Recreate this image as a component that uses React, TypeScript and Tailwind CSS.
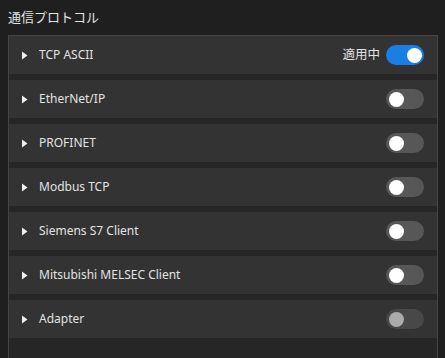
import React from "react";

const rows = [
  { name: "TCP ASCII", on: true },
  { name: "EtherNet/IP" },
  { name: "PROFINET" },
  { name: "Modbus TCP" },
  { name: "Siemens S7 Client" },
  { name: "Mitsubishi MELSEC Client" },
  { name: "Adapter", disabled: true },
];

function Toggle({ on, disabled }: { on?: boolean; disabled?: boolean }) {
  if (on) {
    return (
      <div className="flex h-[20px] w-[38px] items-center justify-end rounded-full bg-[#1a7ee4] pr-[2px]">
        <div className="h-[15px] w-[15px] rounded-full bg-white" />
      </div>
    );
  }
  return (
    <div
      className={
        disabled
          ? "flex h-[20px] w-[38px] items-center rounded-full bg-[#484848] pl-[3px]"
          : "flex h-[20px] w-[38px] items-center rounded-full bg-[#575757] pl-[3px]"
      }
    >
      <div
        className={
          disabled
            ? "h-[15px] w-[15px] rounded-full bg-[#ababab]"
            : "h-[15px] w-[15px] rounded-full bg-white"
        }
      />
    </div>
  );
}

export default function App() {
  return (
    <div
      className="h-[358px] w-[445px] overflow-hidden bg-[#1f1f1f] text-[#e2e2e2]"
      style={{ fontFamily: '"Noto Sans", "Noto Sans CJK JP", sans-serif' }}
    >
      <div className="flex h-[35px] items-center pl-[8px] text-[13px]">通信プロトコル</div>
      <div className="ml-[8px] mr-[7px] h-[323px] border-x border-t border-[#464646] bg-[#262626]">
        <div className="flex flex-col gap-[6px]">
          {rows.map((r) => (
            <div key={r.name} className="flex h-[38px] items-center bg-[#333333] pl-[13px] pr-[13px]">
              <svg width="6" height="9" viewBox="0 0 6 9" className="shrink-0">
                <path d="M0 0.5 L5.5 4.5 L0 8.5 Z" fill="#f0f0f0" />
              </svg>
              <span className="ml-[11px] text-[12px]">{r.name}</span>
              <div className="ml-auto flex items-center gap-[6px]">
                {r.on && <span className="text-[12.5px]">適用中</span>}
                <Toggle on={r.on} disabled={r.disabled} />
              </div>
            </div>
          ))}
        </div>
      </div>
    </div>
  );
}
